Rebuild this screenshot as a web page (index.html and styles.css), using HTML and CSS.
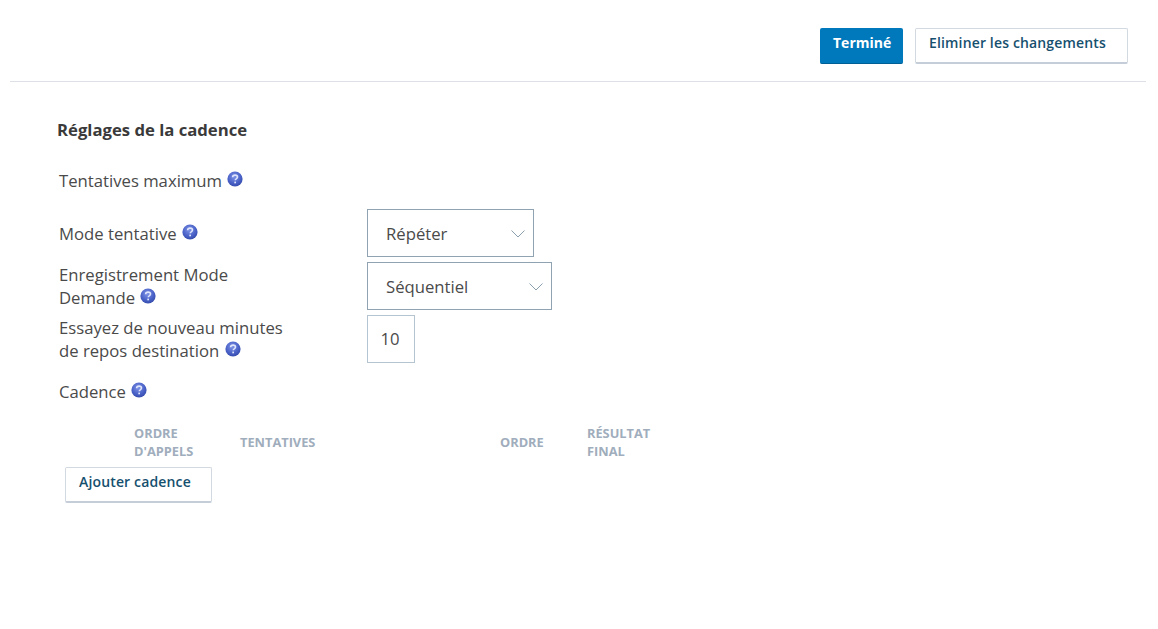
FILE: index.html
```html
<!DOCTYPE html>
<html lang="fr">
<head>
    <meta charset="UTF-8">
    <title>Réglages de la cadence</title>
    <link rel="stylesheet" href="styles.css">
</head>
<body>
    <svg class="defs" width="0" height="0" aria-hidden="true">
        <defs>
            <radialGradient id="helpFill" cx="45%" cy="35%" r="70%">
                <stop offset="0" stop-color="#7f93e6"/>
                <stop offset="0.6" stop-color="#4a62c8"/>
                <stop offset="1" stop-color="#3148a6"/>
            </radialGradient>
            <symbol id="help" viewBox="0 0 16 16">
                <circle cx="8" cy="8" r="7.6" fill="url(#helpFill)"/>
                <path d="M5.6 6.2C5.7 4.8 6.7 4.1 8.1 4.1c1.4 0 2.4.8 2.4 1.9 0 1-.6 1.4-1.3 1.9-.6.4-.9.7-.9 1.4" fill="none" stroke="#dfe5fa" stroke-width="1.6"/>
                <rect x="7.3" y="10.6" width="1.7" height="1.7" fill="#dfe5fa"/>
            </symbol>
        </defs>
    </svg>

    <header class="topbar">
        <button class="btn btn-primary">Terminé</button>
        <button class="btn btn-plain btn-discard">Eliminer les changements</button>
    </header>

    <main class="content">
        <h2 class="section-title">Réglages de la cadence</h2>

        <div class="form">
            <div class="field field-max">
                <div class="label">Tentatives maximum <svg class="help"><use href="#help"/></svg></div>
            </div>
            <div class="field field-mode">
                <div class="label">Mode tentative <svg class="help"><use href="#help"/></svg></div>
                <div class="select select-mode">
                    <span>Répéter</span>
                    <svg class="chevron" viewBox="0 0 14 8"><path d="M.5.5 7 7l6.5-6.5" fill="none" stroke="#8c9fae"/></svg>
                </div>
            </div>
            <div class="field">
                <div class="label label-wrap">Enregistrement Mode<br>Demande <svg class="help"><use href="#help"/></svg></div>
                <div class="select select-order">
                    <span>Séquentiel</span>
                    <svg class="chevron" viewBox="0 0 14 8"><path d="M.5.5 7 7l6.5-6.5" fill="none" stroke="#8c9fae"/></svg>
                </div>
            </div>
            <div class="field">
                <div class="label label-wrap">Essayez de nouveau minutes<br>de repos destination <svg class="help"><use href="#help"/></svg></div>
                <div class="number">10</div>
            </div>
            <div class="field field-cadence">
                <div class="label">Cadence <svg class="help"><use href="#help"/></svg></div>
            </div>
        </div>

        <div class="table-head">
            <div class="col col-call">Ordre<br>d'appels</div>
            <div class="col col-tries">Tentatives</div>
            <div class="col col-order">Ordre</div>
            <div class="col col-result">Résultat<br>final</div>
        </div>
        <button class="btn btn-plain btn-add">Ajouter cadence</button>
    </main>
</body>
</html>
```
FILE: styles.css
```css
* {
    box-sizing: border-box;
}
body {
    margin: 0;
    font-family: 'Open Sans', 'Noto Sans', sans-serif;
    color: #4a4a4a;
    background-color: #fff;
}
.defs {
    display: block;
    height: 0;
}
.topbar {
    display: flex;
    justify-content: flex-end;
    gap: 12px;
    height: 82px;
    margin: 0 12px 0 10px;
    padding: 28px 18px 0 0;
    border-bottom: 1px solid #dde1e6;
}
.btn {
    height: 36px;
    margin: 0;
    border-radius: 2px;
    font-family: inherit;
    font-size: 14px;
    font-weight: 600;
    letter-spacing: 0.15px;
    padding: 0 0 7px 13px;
    text-align: left;
}
.btn-primary {
    width: 83px;
    padding: 0 0 7px 13px;
    color: #fff;
    background-color: #0079bc;
    border: 0;
    border-bottom: 1px solid #005f94;
    font-weight: 700;
    letter-spacing: 0;
}
.btn-plain {
    color: #16506f;
    background-color: #fff;
    border: 1px solid #d3d9e0;
    border-bottom: 2px solid #c5ced8;
}
.btn-discard {
    width: 213px;
}
.content {
    padding: 37px 0 0 57px;
}
.section-title {
    margin: 0;
    font-size: 16.7px;
    line-height: 22px;
    font-weight: 700;
    color: #3a3a3a;
}
.form {
    margin: 28px 0 0 2px;
}
.field {
    display: flex;
    align-items: center;
    margin-bottom: 5px;
}
.field-max {
    height: 24px;
    margin-bottom: 16px;
    padding-bottom: 2px;
}
.field-cadence {
    height: 24px;
    margin-top: 17px;
    margin-bottom: 0;
    padding-bottom: 2px;
}
.label {
    width: 308px;
    font-size: 16.7px;
    line-height: 23px;
}
.help {
    display: inline-block;
    width: 16px;
    height: 16px;
    margin-left: 1px;
    vertical-align: 0;
}
.select {
    display: flex;
    align-items: center;
    justify-content: space-between;
    height: 48px;
    padding: 0 8px 0 18px;
    border: 1px solid #8fa3b3;
    font-size: 16.7px;
}
.select-mode {
    width: 167px;
}
.select-order {
    width: 185px;
}
.chevron {
    width: 14px;
    height: 8px;
    margin-top: 2px;
}
.number {
    display: flex;
    align-items: center;
    justify-content: center;
    width: 48px;
    height: 48px;
    padding: 0 2px 2px 0;
    border: 1px solid #b4c4d0;
    font-size: 16.7px;
}
.table-head {
    display: flex;
    align-items: center;
    height: 36px;
    margin-top: 20px;
    font-size: 12.8px;
    line-height: 18px;
    font-weight: 700;
    text-transform: uppercase;
    color: #a0adbc;
}
.col-call {
    width: 106px;
    margin-left: 77px;
}
.col-tries {
    width: 260px;
}
.col-order {
    width: 87px;
}
.btn-add {
    display: block;
    width: 147px;
    height: 36px;
    margin: 7px 0 0 8px;
}
```
